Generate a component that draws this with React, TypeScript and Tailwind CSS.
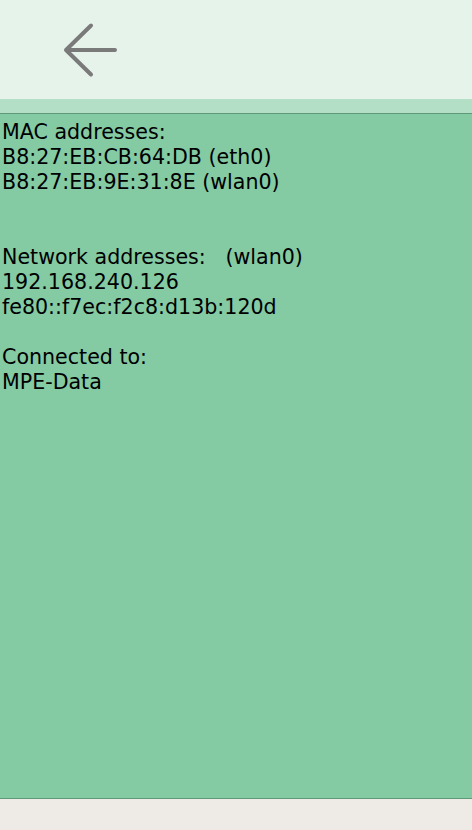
export default function App() {
  const lines = [
    "MAC addresses:",
    "B8:27:EB:CB:64:DB (eth0)",
    "B8:27:EB:9E:31:8E (wlan0)",
    "",
    "",
    "Network addresses:   (wlan0)",
    "192.168.240.126",
    "fe80::f7ec:f2c8:d13b:120d",
    "",
    "Connected to:",
    "MPE-Data",
  ];

  return (
    <div className="w-[472px] h-[830px] flex flex-col bg-[#eeebe6] font-['DejaVu_Sans',sans-serif]">
      {/* Header */}
      <div className="h-[99px] bg-[#e6f3eb] flex items-center pl-[63px]">
        <svg width="56" height="56" viewBox="0 0 56 56">
          <path
            d="M52 25 H3 M3 25 L28 0.5 M3 25 L28 49.5"
            transform="translate(0 3)"
            fill="none"
            stroke="#7a7a7a"
            strokeWidth="4"
            strokeLinecap="round"
            strokeLinejoin="round"
          />
        </svg>
      </div>
      <div className="h-[15px] bg-[#b3dfc7] border-b border-[#5f9a78]" />

      {/* Info panel */}
      <div className="h-[685px] bg-[#84caa2] border-b border-[#5f9a78] pt-[6px] pl-[2px] text-[20.6px] leading-[25px] text-black whitespace-pre">
        {lines.map((l, i) => (
          <div key={i} className="h-[25px]">
            {l}
          </div>
        ))}
      </div>
    </div>
  );
}
